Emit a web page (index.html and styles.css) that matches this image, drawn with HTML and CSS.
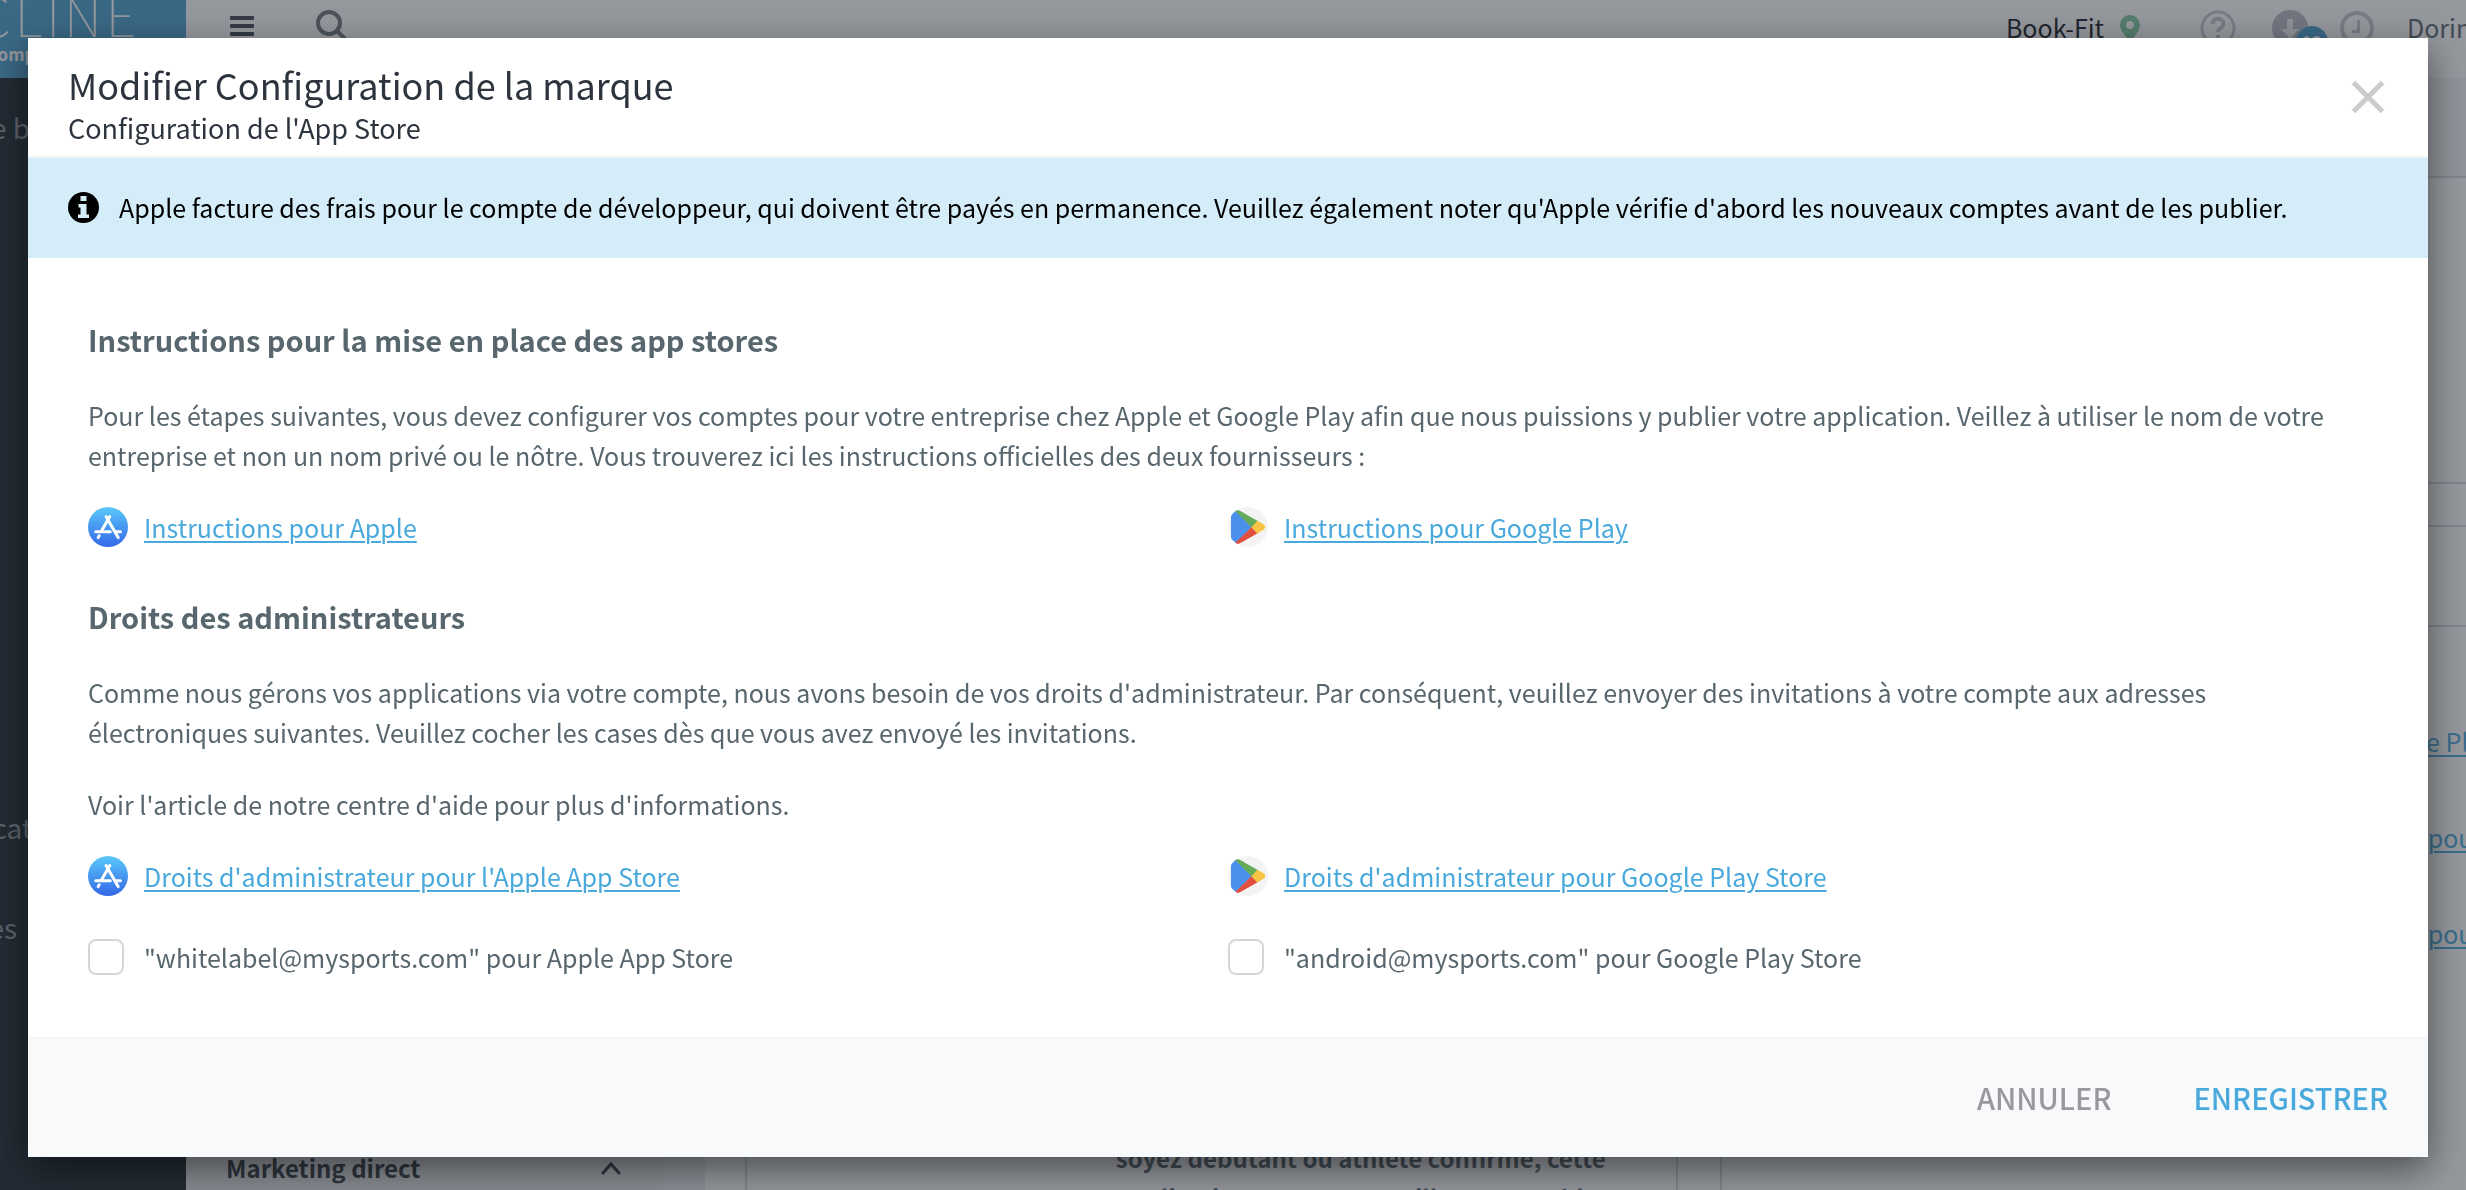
FILE: index.html
```
<!DOCTYPE html>
<html lang="fr">
<head>
  <meta charset="UTF-8">
  <meta name="viewport" content="width=device-width, initial-scale=1.0">
  <title>Modifier Configuration de la marque</title>
  <link rel="stylesheet" href="styles.css">
</head>
<body>

  <!-- Icônes partagées -->
  <svg class="sprite" aria-hidden="true">
    <defs>
      <linearGradient id="apple-bg" x1="0" y1="0" x2="0" y2="1">
        <stop offset="0" stop-color="#5ac8fa"/>
        <stop offset="1" stop-color="#3468e8"/>
      </linearGradient>
    </defs>
    <symbol id="icon-apple" viewBox="0 0 40 40">
      <circle cx="20" cy="20" r="20" fill="url(#apple-bg)"/>
      <g stroke="#fff" stroke-width="3" stroke-linecap="round" fill="none">
        <path d="M21.8 9.5 L13.6 23.8"/>
        <path d="M18 9.5 L30.2 30.6"/>
        <path d="M7.8 24.7 H22.2"/>
        <path d="M28.4 24.7 H32.4"/>
        <path d="M11.2 28.8 L10.2 30.6"/>
      </g>
    </symbol>
    <symbol id="icon-play" viewBox="0 0 40 40">
      <circle cx="20" cy="20" r="20" fill="#f3f3f3"/>
      <path d="M3 10 Q3 8.6 4 7.4 L8 3.6 L23.6 20.2 L8 36 L4 32.4 Q3 31.4 3 30Z" fill="#4a90ec"/>
      <path d="M7.4 4.4 Q9 2.4 11.4 3.6 L29.8 14 L23.6 20.4Z" fill="#64aa58"/>
      <path d="M29.4 13.8 L36 17.6 Q38.6 20 36 22.4 L29 26.8 L23.4 20.3Z" fill="#f7c445"/>
      <path d="M23.4 20.2 L29.2 26.6 L11.4 36.6 Q9 37.6 7.4 35.8Z" fill="#e1503f"/>
    </symbol>
  </svg>

  <div class="app">
    <aside class="sidebar">
      <div class="logo">
        <span class="logo-name">CYCLINE</span>
        <span class="logo-sub">Fitness company</span>
      </div>
      <nav class="side-nav">
        <a href="#">Tableau de bord</a>
        <a href="#">Membres</a>
        <a href="#">Planning</a>
        <a href="#">Ventes</a>
        <a href="#">Contrats</a>
        <a href="#">Finances</a>
        <a href="#">Appareils</a>
        <a href="#">Communication</a>
        <a href="#">Statistiques</a>
      </nav>
    </aside>

    <div class="page">
      <header class="topbar">
        <button class="icon-button" aria-label="Menu">
          <svg width="24" height="20" viewBox="0 0 24 20" fill="#3d4450"><rect width="24" height="4" rx="1"/><rect y="8" width="24" height="4" rx="1"/><rect y="16" width="24" height="4" rx="1"/></svg>
        </button>
        <button class="icon-button search" aria-label="Rechercher">
          <svg width="32" height="32" viewBox="0 0 32 32" fill="none" stroke="#70757b" stroke-width="4"><circle cx="13" cy="15" r="11"/><path d="M21 23 L30 32"/></svg>
        </button>
        <div class="top-right">
          <span class="studio">Book-Fit</span>
          <svg class="pin" width="20" height="28" viewBox="0 0 20 28"><path fill="#7fc9a0" fill-rule="evenodd" d="M10 0a10 10 0 0 1 10 10c0 6-6 11-10 18C6 21 0 16 0 10A10 10 0 0 1 10 0zm0 6a4 4 0 1 0 0 8 4 4 0 0 0 0-8z"/></svg>
          <svg class="help" width="36" height="36" viewBox="0 0 36 36" fill="none" stroke="#c6c8ce" stroke-width="3"><circle cx="18" cy="18" r="16"/><path d="M12.500 14c0-7 11-7 11 0 0 4-5.500 4-5.500 8" stroke-width="4"/><path d="M18 25v4" stroke-width="4"/></svg>
          <span class="download">
            <svg width="36" height="36" viewBox="0 0 36 36"><circle cx="18" cy="18" r="18" fill="#b9bbc6"/><path d="M15 9h6v10h6l-9 10-9-10h6z" fill="#f2f3f5"/></svg>
            <span class="badge">12</span>
          </span>
          <svg class="clock" width="34" height="34" viewBox="0 0 34 34" fill="none" stroke="#c6c8ce" stroke-width="4"><circle cx="17" cy="17" r="15"/><path d="M18.500 9v11.500H12" stroke-width="3"/></svg>
          <span class="user">Dorine</span>
        </div>
      </header>

      <div class="columns">
        <div class="submenu">
          <div class="submenu-group">
            <span>Marketing direct</span>
            <svg width="20" height="14" viewBox="0 0 20 14" fill="none" stroke="#333a44" stroke-width="3" stroke-linecap="round"><path d="M2 12 L10 3 L18 12"/></svg>
          </div>
        </div>
        <div class="main">
          <section class="panel preview">
            <p>soyez débutant ou athlète confirmé, cette application sera votre meilleur ensemble</p>
          </section>
          <section class="panel stores">
            <div class="stores-top"></div>
            <div class="stores-row"></div>
            <div class="stores-info"></div>
            <ul class="stores-links">
              <li><a href="#">Instructions pour Google Play</a></li>
              <li><a href="#">Droits d'administrateur pour Apple</a></li>
              <li><a href="#">Droits d'administrateur pour Google</a></li>
            </ul>
          </section>
        </div>
      </div>
    </div>
  </div>

  <div class="backdrop">
    <form class="modal" role="dialog" aria-labelledby="modal-title">
      <header class="modal-header">
        <div>
          <h1 id="modal-title">Modifier Configuration de la marque</h1>
          <p>Configuration de l'App Store</p>
        </div>
        <button type="button" class="close" aria-label="Fermer">
          <svg width="34" height="34" viewBox="0 0 34 34" stroke="#ccc" stroke-width="5"><path d="M2.500 2.500 L31.500 31.500 M31.500 2.500 L2.500 31.500"/></svg>
        </button>
      </header>

      <div class="notice">
        <svg width="31" height="31" viewBox="0 0 31 31"><circle cx="15.500" cy="15.500" r="15.500"/><path d="M12.500 4h6v5h-6zM10.500 12h8v10.500h2.500V26h-11v-3.500h2.500v-7h-2z" fill="#d4edf9"/></svg>
        <p>Apple facture des frais pour le compte de développeur, qui doivent être payés en permanence. Veuillez également noter qu'Apple vérifie d'abord les nouveaux comptes avant de les publier.</p>
      </div>

      <div class="modal-body">
        <h2>Instructions pour la mise en place des app stores</h2>
        <p>Pour les étapes suivantes, vous devez configurer vos comptes pour votre entreprise chez Apple et Google Play afin que nous puissions y publier votre application. Veillez à utiliser le nom de votre entreprise et non un nom privé ou le nôtre. Vous trouverez ici les instructions officielles des deux fournisseurs :</p>
        <div class="row">
          <div class="store"><svg><use href="#icon-apple"/></svg><a href="#">Instructions pour Apple</a></div>
          <div class="store"><svg><use href="#icon-play"/></svg><a href="#">Instructions pour Google Play</a></div>
        </div>

        <h2>Droits des administrateurs</h2>
        <p>Comme nous gérons vos applications via votre compte, nous avons besoin de vos droits d'administrateur. Par conséquent, veuillez envoyer des invitations à votre compte aux adresses électroniques suivantes. Veuillez cocher les cases dès que vous avez envoyé les invitations.</p>
        <p>Voir l'article de notre centre d'aide pour plus d'informations.</p>
        <div class="row">
          <div class="store"><svg><use href="#icon-apple"/></svg><a href="#">Droits d'administrateur pour l'Apple App Store</a></div>
          <div class="store"><svg><use href="#icon-play"/></svg><a href="#">Droits d'administrateur pour Google Play Store</a></div>
        </div>
        <div class="row checks">
          <div class="check"><input type="checkbox" id="check-apple"><label for="check-apple">"whitelabel@mysports.com" pour Apple App Store</label></div>
          <div class="check"><input type="checkbox" id="check-google"><label for="check-google">"android@mysports.com" pour Google Play Store</label></div>
        </div>
      </div>

      <footer class="modal-footer">
        <button type="button" class="action">Annuler</button>
        <button type="submit" class="action primary">Enregistrer</button>
      </footer>
    </form>
  </div>

</body>
</html>
```
FILE: styles.css
```
* {
  box-sizing: border-box;
}

body {
  margin: 0;
  height: 100vh;
  overflow: hidden;
  background: #fff;
  color: #58666e;
  font-family: "Noto Sans CJK SC", "Noto Sans", sans-serif;
  font-size: 25px;
  line-height: 40px;
}

h1, h2, p, ul {
  margin: 0;
}

button {
  padding: 0;
  border: none;
  background: none;
  font-family: inherit;
  cursor: pointer;
}

a {
  color: #49a9dc;
  text-decoration-thickness: 2px;
  text-underline-offset: 3px;
}

svg {
  display: block;
  flex: none;
}

.sprite {
  position: absolute;
  width: 0;
  height: 0;
}

/* Page derrière la fenêtre */
.app {
  display: flex;
  height: 100%;
}

.sidebar {
  flex: none;
  width: 370px;
  margin-left: -184px;
  background: #1b272e;
}

.logo {
  display: flex;
  flex-direction: column;
  align-items: flex-end;
  height: 78px;
  padding-right: 46px;
  overflow: hidden;
  background: #49a1d0;
  color: #fff;
}

.logo-name {
  margin-top: -16px;
  font-size: 54px;
  font-weight: 100;
  line-height: 60px;
  letter-spacing: 4px;
}

.logo-sub {
  margin-right: 74px;
  font-size: 17px;
  font-weight: bold;
  line-height: 20px;
}

.side-nav {
  display: flex;
  flex-direction: column;
  padding: 0 48px;
}

.side-nav a {
  height: 100px;
  color: #8f9499;
  font-size: 28px;
  line-height: 98px;
  text-decoration: none;
  white-space: nowrap;
}

.page {
  display: flex;
  flex: 1;
  flex-direction: column;
  min-width: 0;
}

.topbar {
  display: flex;
  align-items: flex-start;
  height: 78px;
  padding: 8px 0 0 44px;
}

.icon-button {
  padding-top: 8px;
}

.search {
  margin-left: 62px;
  padding-top: 0;
}

.top-right {
  display: flex;
  align-items: flex-start;
  margin-left: auto;
}

.studio,
.user {
  line-height: 38px;
}

.studio {
  color: #15181f;
}

.pin {
  margin: 7px 60px 0 16px;
}

.help,
.download {
  margin: 2px 36px 0 0;
}

.download {
  position: relative;
  margin-right: 32px;
}

.badge {
  position: absolute;
  top: 16px;
  left: 24px;
  width: 32px;
  height: 32px;
  border-radius: 50%;
  background: #49a1d0;
  color: #fff;
  font-size: 17px;
  font-weight: bold;
  line-height: 32px;
  text-align: center;
}

.clock {
  margin-top: 3px;
}

.user {
  width: 59px;
  margin-left: 33px;
  overflow: hidden;
  white-space: nowrap;
}

.columns {
  display: flex;
  flex: 1;
  min-height: 0;
}

.submenu {
  display: flex;
  flex: none;
  flex-direction: column;
  justify-content: flex-end;
  width: 519px;
  border-right: 42px solid #edeff1;
  background: #e8e9eb;
}

.submenu-group {
  display: flex;
  align-items: center;
  justify-content: space-between;
  padding: 0 42px 2px 40px;
  color: #333a44;
  font-size: 24px;
  font-weight: bold;
}

.main {
  display: grid;
  flex: 1;
  grid-template-columns: minmax(0, 5fr) minmax(0, 4fr);
  gap: 42px;
  padding-left: 40px;
}

.panel {
  border-left: 2px solid #d5dadd;
}

.preview {
  display: flex;
  align-items: flex-end;
  justify-content: flex-end;
  height: 1140px;
  padding-right: 54px;
  border-right: 2px solid #d5dadd;
}

.preview p {
  width: 506px;
  font-size: 24px;
  font-weight: bold;
}

.stores {
  overflow: hidden;
}

.stores-top {
  height: 100px;
  border-bottom: 2px solid #d5dadd;
  background: #f4f5f6;
}

.stores-row {
  height: 306px;
  border-bottom: 2px solid #d5dadd;
}

.stores-info {
  height: 102px;
  margin-top: 41px;
  border-top: 2px solid #d5dadd;
  border-bottom: 2px solid #d5dadd;
}

.stores-links {
  padding: 94px 0 0 430px;
  list-style: none;
}

.stores-links li {
  margin-bottom: 56px;
  white-space: nowrap;
}

/* Fenêtre modale */
.backdrop {
  position: fixed;
  inset: 0;
  padding: 38px 38px 0 28px;
  background: rgba(43, 49, 60, 0.5);
}

.modal {
  background: #fff;
  box-shadow: 0 12px 36px rgba(0, 0, 0, 0.5);
}

.modal-header {
  display: flex;
  align-items: flex-start;
  justify-content: space-between;
  padding: 24px 43px 8px 40px;
  border-bottom: 2px solid #eff3f6;
  color: #2d343e;
}

.modal-header h1 {
  margin-bottom: 2px;
  font-size: 36px;
  font-weight: normal;
  line-height: 44px;
}

.modal-header p {
  font-size: 27px;
}

.close {
  margin-top: 18px;
}

.notice {
  display: flex;
  align-items: center;
  gap: 20px;
  padding: 29px 40px 31px;
  background: #d4edf9;
  color: #000;
}

.modal-body {
  padding: 61px 60px 60px;
}

.modal-body h2 {
  margin-bottom: 36px;
  font-size: 29px;
  font-weight: bold;
}

.modal-body p {
  margin-bottom: 32px;
}

.row {
  display: grid;
  grid-template-columns: 1fr 1fr;
}

.row + h2 {
  margin-top: 49px;
}

.store,
.check {
  display: flex;
  align-items: center;
  gap: 16px;
}

.store svg {
  width: 40px;
  height: 40px;
}

.checks {
  margin-top: 41px;
}

.check {
  gap: 20px;
}

.check input {
  width: 36px;
  height: 36px;
  margin: 0;
  border: 2px solid #d5d5dc;
  border-radius: 8px;
  background: #fff;
  appearance: none;
}

.check input:checked {
  background: #49a9dc;
}

.modal-footer {
  display: flex;
  align-items: center;
  justify-content: flex-end;
  gap: 82px;
  height: 120px;
  padding: 0 40px 2px;
  border-top: 2px solid #f2f4f6;
  background: #f8f9fb;
}

.action {
  color: #98999e;
  font-size: 29px;
  font-weight: 500;
  text-transform: uppercase;
}

.primary {
  color: #49a9dc;
}
```
